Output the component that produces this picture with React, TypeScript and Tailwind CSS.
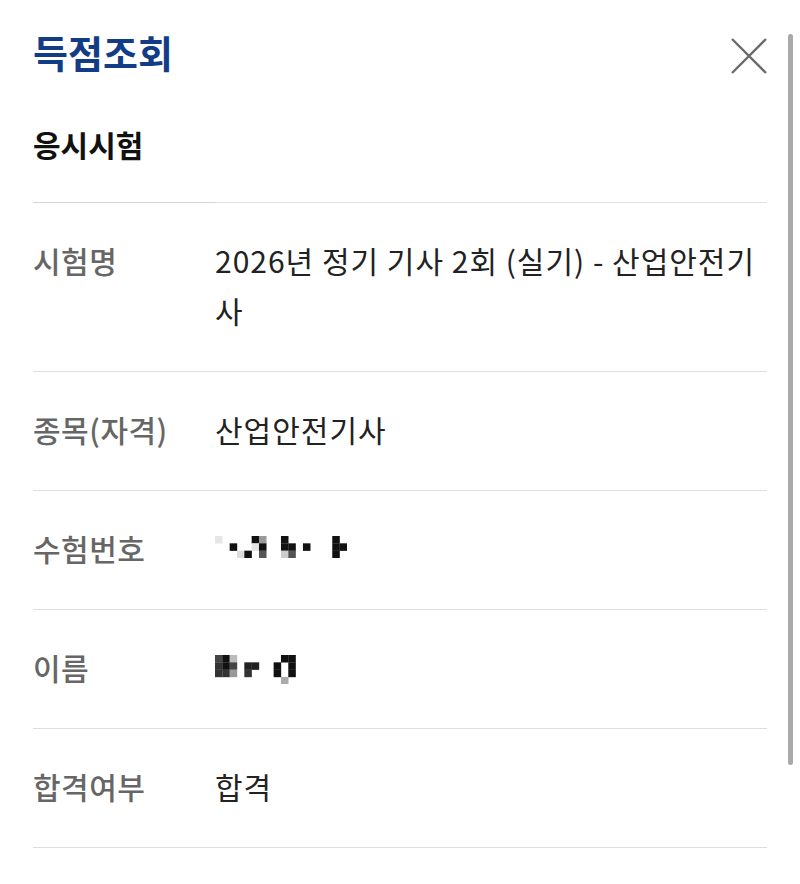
import type { ReactNode } from 'react';

type Cell = [number, number, string];

// pixelated (censored) values, drawn as a grid of squares
const examNoCells: Cell[] = [
  [0, 0, '#e6e6e6'],
  [2, 1, '#111111'],
  [3, 2, '#dddddd'],
  [4, 2, '#111111'],
  [5, 0, '#111111'],
  [5, 1, '#e4e4e4'],
  [6, 0, '#9a9a9a'],
  [6, 1, '#111111'],
  [6, 2, '#555555'],
  [9, 0, '#111111'],
  [9, 1, '#111111'],
  [9, 2, '#cccccc'],
  [10, 1, '#111111'],
  [10, 2, '#555555'],
  [12, 1, '#111111'],
  [16, 0, '#111111'],
  [16, 1, '#111111'],
  [16, 2, '#111111'],
  [17, 1, '#111111'],
];

const nameCells: Cell[] = [
  [0, 0, '#444444'],
  [0, 1, '#333333'],
  [0, 2, '#333333'],
  [1, 0, '#111111'],
  [1, 1, '#111111'],
  [1, 2, '#333333'],
  [2, 0, '#bbbbbb'],
  [2, 1, '#444444'],
  [2, 2, '#999999'],
  [4, 1, '#222222'],
  [5, 1, '#222222'],
  [4, 2, '#333333'],
  [8, 1, '#111111'],
  [8, 2, '#111111'],
  [9, 0, '#111111'],
  [9, 3, '#aaaaaa'],
  [10, 0, '#111111'],
  [10, 1, '#111111'],
  [10, 2, '#111111'],
];

function Mosaic({ cells }: { cells: Cell[] }) {
  const size = 7.33;
  const cols = Math.max(...cells.map((c) => c[0])) + 1;
  const rows = Math.max(...cells.map((c) => c[1])) + 1;
  return (
    <svg
      aria-hidden="true"
      width={cols * size}
      height={rows * size}
      viewBox={`0 0 ${cols * size} ${rows * size}`}
      className="mt-[13px] block"
    >
      {cells.map(([x, y, fill], i) => (
        <rect key={i} x={x * size} y={y * size} width={size + 0.2} height={size + 0.2} fill={fill} />
      ))}
    </svg>
  );
}

function Row({ label, children }: { label: string; children: ReactNode }) {
  return (
    <div className="flex border-b border-[#dedede] pt-[32px] pb-[36px]">
      <div className="w-[182px] shrink-0 text-[30px] leading-[50px] font-medium tracking-[0.5px] text-[#666666]">
        {label}
      </div>
      <div className="min-w-0 flex-1 text-[30px] leading-[50px] tracking-[1px] text-[#222222]">{children}</div>
    </div>
  );
}

export default function App() {
  return (
    <div
      className="relative min-h-[884px] bg-white px-[33px] pt-[29px]"
      style={{ fontFamily: '"Noto Sans CJK KR", "Noto Sans", sans-serif' }}
    >
      {/* Header */}
      <div className="flex items-start justify-between">
        <h1 className="text-[38px] leading-[46px] font-bold text-[#123d86]">득점조회</h1>
        <button type="button" aria-label="닫기" className="mt-[9px] h-[36px] w-[36px]">
          <svg viewBox="0 0 36 36" className="h-[36px] w-[36px]" fill="none" stroke="#6b6b6b" strokeWidth="2.4">
            <path d="M1 1 L35 35 M35 1 L1 35" />
          </svg>
        </button>
      </div>

      <h2 className="mt-[49px] mb-[38px] text-[30px] leading-[40px] font-bold text-[#111111]">응시시험</h2>

      <div className="relative border-t border-[#e2e2e2]">
        <div className="absolute -top-px left-0 h-px w-[182px] bg-[#d4d4d4]" />
        <Row label="시험명">2026년 정기 기사 2회 (실기) - 산업안전기사</Row>
        <Row label="종목(자격)">산업안전기사</Row>
        <Row label="수험번호">
          <Mosaic cells={examNoCells} />
        </Row>
        <Row label="이름">
          <Mosaic cells={nameCells} />
        </Row>
        <Row label="합격여부">합격</Row>
      </div>

      {/* scrollbar overlay */}
      <div className="absolute top-[34px] left-[788px] h-[731px] w-[5px] rounded-full bg-[#a9a9a9]" />
    </div>
  );
}
